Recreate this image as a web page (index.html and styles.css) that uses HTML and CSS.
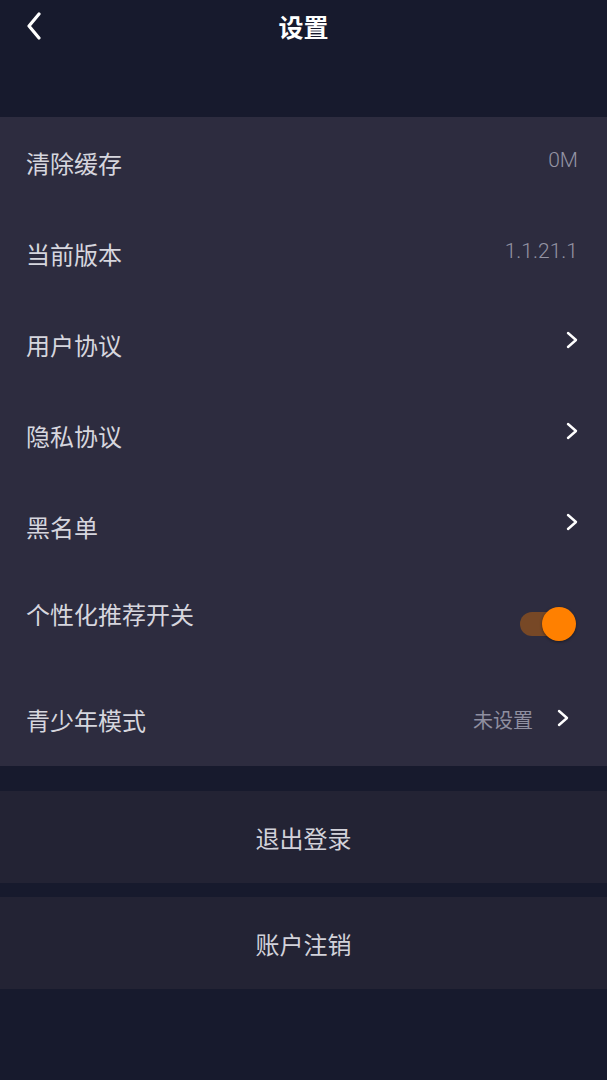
FILE: index.html
```html
<!DOCTYPE html>
<html lang="zh">
<head>
<meta charset="utf-8">
<title>设置</title>
<link rel="stylesheet" href="styles.css">
</head>
<body>
<div class="page">
  <header class="header">
    <svg class="back" viewBox="0 0 16 28" width="16" height="28"><path d="M13 2 L3 14 L13 26" fill="none" stroke="#fff" stroke-width="3.2" stroke-linecap="round" stroke-linejoin="round"/></svg>
    <h1 class="title">设置</h1>
  </header>
  <section class="panel">
    <div class="row"><span class="label">清除缓存</span><span class="value num">0M</span></div>
    <div class="row"><span class="label">当前版本</span><span class="value num">1.1.21.1</span></div>
    <div class="row"><span class="label">用户协议</span><svg class="chev" viewBox="0 0 12 18" width="12" height="18"><path d="M2 2 L10 9 L2 16" fill="none" stroke="#fff" stroke-width="2.4" stroke-linecap="round" stroke-linejoin="round"/></svg></div>
    <div class="row"><span class="label">隐私协议</span><svg class="chev" viewBox="0 0 12 18" width="12" height="18"><path d="M2 2 L10 9 L2 16" fill="none" stroke="#fff" stroke-width="2.4" stroke-linecap="round" stroke-linejoin="round"/></svg></div>
    <div class="row"><span class="label">黑名单</span><svg class="chev" viewBox="0 0 12 18" width="12" height="18"><path d="M2 2 L10 9 L2 16" fill="none" stroke="#fff" stroke-width="2.4" stroke-linecap="round" stroke-linejoin="round"/></svg></div>
    <div class="row"><span class="label label-up">个性化推荐开关</span><span class="toggle"><span class="knob"></span></span></div>
    <div class="row row-last"><span class="label">青少年模式</span><span class="right"><span class="value">未设置</span><svg class="chev" viewBox="0 0 12 18" width="12" height="18"><path d="M2 2 L10 9 L2 16" fill="none" stroke="#fff" stroke-width="2.4" stroke-linecap="round" stroke-linejoin="round"/></svg></span></div>
  </section>
  <div class="btn btn-first">退出登录</div>
  <div class="btn btn-second">账户注销</div>
</div>
</body>
</html>
```
FILE: styles.css
```css
* { box-sizing: border-box; }
html, body { margin: 0; padding: 0; }
body {
  background: #171a2d;
  font-family: "Noto Sans CJK SC", "Noto Sans", sans-serif;
  width: 607px;
  height: 1080px;
  overflow: hidden;
}
.page { display: flex; flex-direction: column; }
.header {
  height: 117px;
  position: relative;
  display: flex;
  justify-content: center;
}
.back { position: absolute; left: 26px; top: 12px; }
.title {
  margin: 0;
  margin-top: 6px;
  height: 40px;
  line-height: 40px;
  color: #fff;
  font-size: 25px;
  font-weight: 700;
}
.panel {
  background: #2d2c3f;
  display: flex;
  flex-direction: column;
}
.row {
  height: 91px;
  display: flex;
  align-items: center;
  justify-content: space-between;
  padding: 0 29px 0 26px;
}
.row-last { height: 103px; padding-top: 10px; padding-right: 38px; }
.label {
  color: #d6d6de;
  font-size: 24px;
  line-height: 1;
}
.label-up { margin-top: -8px; }
.value {
  color: #8f8fa0;
  font-size: 20px;
  line-height: 1;
}
.num { font-family: Roboto, "Noto Sans", sans-serif; font-weight: 300; font-size: 21px; margin-top: -4px; color: #9494a4; }
.right { display: flex; align-items: center; gap: 24px; }
.chev { margin-top: -10px; }
.row-last .chev { margin-top: -4px; }
.toggle {
  position: relative;
  width: 40px;
  height: 24px;
  border-radius: 12px;
  background: #774826;
  margin-top: 12px;
  margin-right: 18px;
}
.knob {
  position: absolute;
  left: 22px;
  top: -5px;
  width: 34px;
  height: 34px;
  border-radius: 50%;
  background: #ff8000;
  box-shadow: 0 1px 3px rgba(0,0,0,0.4);
}
.btn {
  height: 92px;
  background: #232334;
  color: #d2d2da;
  font-size: 24px;
  display: flex;
  align-items: center;
  justify-content: center;
}
.btn-first { margin-top: 25px; }
.btn-second { margin-top: 14px; }
```
